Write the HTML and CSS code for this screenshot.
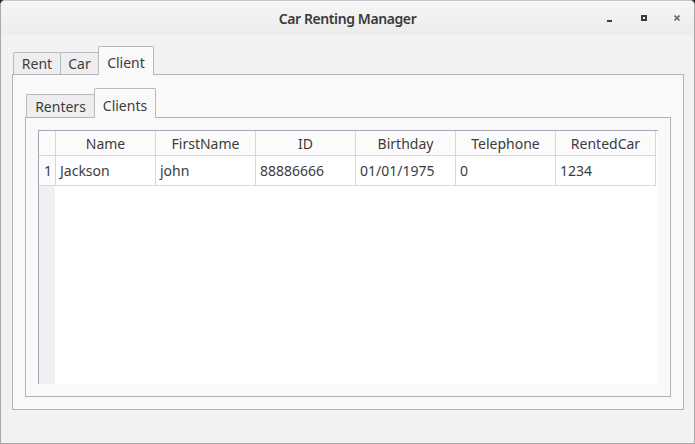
FILE: index.html
```html
<!DOCTYPE html>
<html>
<head>
<meta charset="utf-8">
<link rel="stylesheet" href="styles.css">
</head>
<body>
<div class="window">
  <div class="titlebar">
    <span class="title">Car Renting Manager</span>
    <div class="controls">
      <span class="min"></span>
      <span class="max"></span>
      <svg class="close" width="6" height="6" viewBox="0 0 6 6"><path d="M0.5 0.5 L5.5 5.5 M5.5 0.5 L0.5 5.5" stroke="#6b6b6b" stroke-width="1.6"/></svg>
    </div>
  </div>
  <div class="client">
    <div class="tabwidget outer">
      <div class="tabbar">
        <div class="tab w-rent">Rent</div>
        <div class="tab w-car">Car</div>
        <div class="tab active w-client">Client</div>
      </div>
      <div class="pane outer-pane">
        <div class="tabwidget inner">
          <div class="tabbar inner-bar">
            <div class="tab w-renters">Renters</div>
            <div class="tab active w-clients">Clients</div>
          </div>
          <div class="pane inner-pane">
            <div class="table">
              <div class="row header">
                <div class="vh corner"></div>
                <div class="cell hc">Name</div>
                <div class="cell hc">FirstName</div>
                <div class="cell hc">ID</div>
                <div class="cell hc">Birthday</div>
                <div class="cell hc">Telephone</div>
                <div class="cell hc">RentedCar</div>
              </div>
              <div class="row data">
                <div class="vh">1</div>
                <div class="cell">Jackson</div>
                <div class="cell">john</div>
                <div class="cell">88886666</div>
                <div class="cell">01/01/1975</div>
                <div class="cell">0</div>
                <div class="cell">1234</div>
              </div>
              <div class="empty">
                <div class="vstrip"></div>
                <div class="blank"></div>
              </div>
            </div>
          </div>
        </div>
      </div>
    </div>
  </div>
</div>
</body>
</html>
```
FILE: styles.css
```css
* { box-sizing: border-box; }
html, body { margin: 0; padding: 0; }
body {
  background: #2c2c2c;
  width: 695px;
  height: 444px;
  overflow: hidden;
  font-family: "Noto Sans", "DejaVu Sans", sans-serif;
  font-size: 14px;
  color: #3c3c3c;
}
.window {
  width: 695px;
  height: 444px;
  background: #f2f2f4;
  border: 1px solid #a9a9a9;
  border-top-color: #c8c8c8;
  border-radius: 5px 5px 0 0;
  display: flex;
  flex-direction: column;
  overflow: hidden;
}
.titlebar {
  height: 34px;
  flex: none;
  background: linear-gradient(#f6f6f6, #ececec);
  position: relative;
  display: flex;
  align-items: center;
  justify-content: center;
}
.title {
  font-weight: 600;
  font-size: 14px;
  letter-spacing: -0.4px;
  color: #3a3a3a;
  margin-top: 1px;
}
.controls {
  position: absolute;
  left: 606px;
  top: 0;
  display: flex;
  align-items: flex-start;
}
.min {
  display: block;
  width: 5px;
  height: 2px;
  background: #3c3c3c;
  margin-top: 19px;
}
.max {
  display: block;
  width: 6px;
  height: 6px;
  border: 2px solid #3c3c3c;
  margin-top: 14px;
  margin-left: 29px;
}
.close {
  display: block;
  margin-top: 14px;
  margin-left: 27px;
}

.client {
  flex: 1;
  padding: 11px 10px 33px 11px;
  display: flex;
}
.tabwidget {
  flex: 1;
  display: flex;
  flex-direction: column;
}
.tabbar {
  height: 28px;
  flex: none;
  display: flex;
  align-items: flex-end;
  padding-left: 1px;
}
.inner-bar { height: 29px; }
.tab {
  height: 22px;
  border: 1px solid #b9b9b9;
  border-bottom: none;
  background: #eeeef0;
  display: flex;
  align-items: center;
  justify-content: center;
  margin-left: -1px;
  padding-bottom: 1px;
  border-radius: 2px 2px 0 0;
}
.tab:first-child { margin-left: 0; }
.inner-bar .tab { height: 23px; padding-bottom: 0; }
.tab.active {
  height: 29px;
  margin-bottom: -1px;
  background: #f9f9f9;
  position: relative;
  z-index: 1;
  padding-top: 3px;
  padding-bottom: 0;
}
.inner-bar .tab.active { height: 30px; padding-top: 3px; }
.w-rent { width: 48px; }
.w-car { width: 39px; }
.w-client { width: 56px; }
.w-renters { width: 69px; }
.w-clients { width: 62px; }

.pane {
  flex: 1;
  background: #f9f9f9;
  border: 1px solid #b3b3b3;
  display: flex;
}
.outer-pane { padding: 13px 12px 12px 12px; }
.inner-pane { padding: 12px 11px 12px 12px; }

.table {
  width: 620px;
  height: 254px;
  border-left: 1px solid #a6a4b4;
  border-top: 1px solid #a6a4b4;
  display: flex;
  flex-direction: column;
  background: #ffffff;
}
.row {
  display: flex;
  flex: none;
}
.header { height: 25px; }
.data { height: 30px; }
.vh {
  width: 17px;
  flex: none;
  border-right: 1px solid #d8d8d8;
  border-bottom: 1px solid #d8d8d8;
  background: #fbfbfb;
  display: flex;
  align-items: center;
  justify-content: center;
  padding-left: 2px;
}
.cell {
  width: 100px;
  flex: none;
  border-right: 1px solid #d8d8d8;
  border-bottom: 1px solid #d8d8d8;
  display: flex;
  align-items: center;
  padding-left: 4px;
  white-space: nowrap;
}
.hc {
  justify-content: center;
  padding-left: 0;
  background: #fbfbfb;
}
.empty {
  flex: 1;
  display: flex;
}
.vstrip {
  width: 16px;
  background: #f0f0f3;
}
.blank {
  flex: 1;
  background: #ffffff;
}
```
